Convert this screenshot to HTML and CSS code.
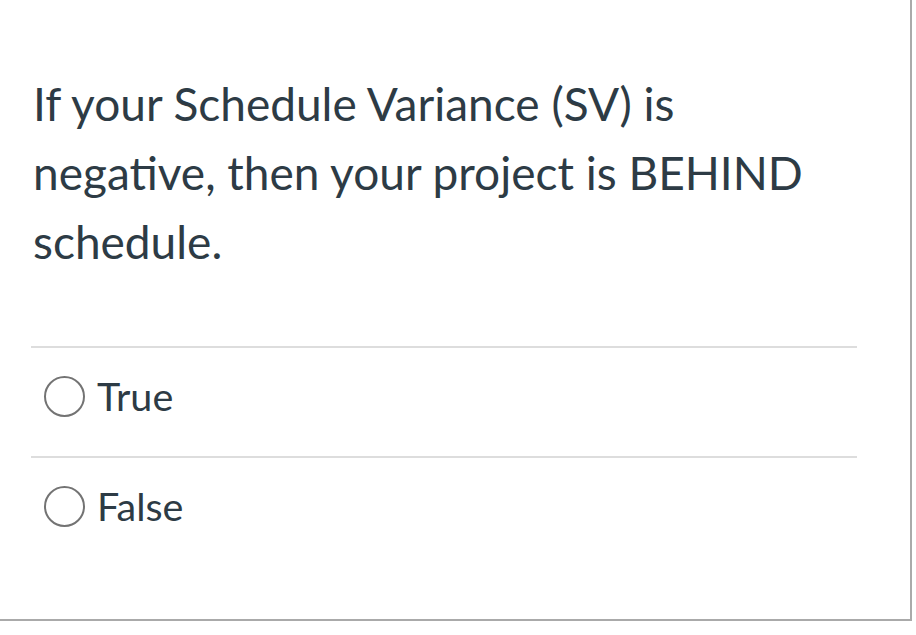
FILE: index.html
```html
<!DOCTYPE html>
<html>
<head>
<meta charset="utf-8">
<link rel="stylesheet" href="styles.css">
</head>
<body>
<div class="question">
  <div class="question-text">If your Schedule Variance (SV) is negative, then your project is BEHIND schedule.</div>
  <div class="answers">
    <label class="answer"><span class="radio"></span><span class="answer-label">True</span></label>
    <label class="answer"><span class="radio"></span><span class="answer-label">False</span></label>
  </div>
</div>
</body>
</html>
```

FILE: styles.css
```css
html, body {
  margin: 0;
  padding: 0;
  background: #ffffff;
}
body {
  font-family: Lato, "Open Sans", sans-serif;
  color: #2d3b45;
}
.question {
  box-sizing: border-box;
  width: 912px;
  height: 621px;
  border-right: 2px solid #aaaaaa;
  border-bottom: 2px solid #aaaaaa;
  padding: 69px 0 0 0;
}
.question-text {
  padding-left: 33px;
  width: 790px;
  font-size: 46px;
  line-height: 69px;
}
.answers {
  margin: 70px 0 0 31px;
  width: 826px;
}
.answer {
  box-sizing: border-box;
  display: flex;
  align-items: center;
  height: 110px;
  border-top: 2px solid #dddddd;
  padding: 0 0 12px 13px;
}
.radio {
  box-sizing: border-box;
  width: 41px;
  height: 41px;
  border: 2px solid #737373;
  border-radius: 50%;
  flex: none;
}
.answer-label {
  margin-left: 12px;
  font-size: 39.5px;
  line-height: 46px;
}
```
